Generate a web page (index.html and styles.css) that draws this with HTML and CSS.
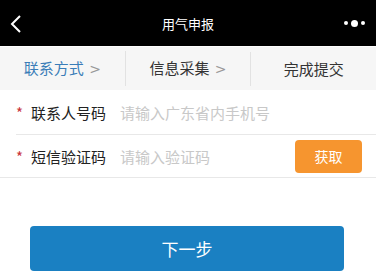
FILE: index.html
```html
<!DOCTYPE html>
<html lang="zh-CN">
<head>
  <meta charset="UTF-8">
  <meta name="viewport" content="width=device-width, initial-scale=1.0">
  <title>用气申报</title>
  <link rel="stylesheet" href="styles.css">
</head>
<body>
  <header class="topbar">
    <svg class="back" width="12" height="20" viewBox="0 0 12 20">
      <path d="M10 2 L2 10 L10 18" fill="none" stroke="#fff" stroke-width="2"/>
    </svg>
    <span class="title">用气申报</span>
    <span class="more"><i></i><i class="big"></i><i></i></span>
  </header>

  <nav class="steps">
    <div class="step active">联系方式 <span class="arrow">&gt;</span></div>
    <div class="step">信息采集 <span class="arrow">&gt;</span></div>
    <div class="step">完成提交</div>
  </nav>

  <form class="form">
    <div class="row">
      <span class="star">*</span>
      <label class="label">联系人号码</label>
      <input class="field" type="text" placeholder="请输入广东省内手机号">
    </div>
    <div class="row last">
      <span class="star">*</span>
      <label class="label">短信验证码</label>
      <input class="field" type="text" placeholder="请输入验证码">
      <button type="button" class="code-btn">获取</button>
    </div>
  </form>

  <div class="actions">
    <button type="button" class="next-btn">下一步</button>
  </div>
</body>
</html>
```

FILE: styles.css
```css
body {
  margin: 0;
  padding: 0;
  font-family: "Noto Sans CJK SC", "Noto Sans", sans-serif;
  background: #fff;
  color: #222;
  width: 376px;
  height: 278px;
  overflow: hidden;
}

.topbar {
  height: 46px;
  background: #000;
  display: flex;
  align-items: center;
  justify-content: space-between;
  padding: 0 11px 0 10px;
  box-sizing: border-box;
  color: #fff;
}
.topbar .back { margin-top: 1px; }
.topbar .title { font-size: 13px; margin-left: 10px; }
.more { display: flex; align-items: center; gap: 3px; }
.more i { width: 4px; height: 4px; border-radius: 50%; background: #fff; display: block; }
.more i.big { width: 7px; height: 7px; }

.steps {
  height: 43px;
  margin-top: 1px;
  background: #f6f6f6;
  display: flex;
  align-items: center;
  font-size: 15px;
}
.step {
  flex: 1;
  text-align: center;
  color: #333;
  border-left: 1px solid #e2e2e2;
  line-height: 34px;
}
.step:first-child { border-left: none; }
.step.active { color: #3a7db8; }
.arrow { color: #999; font-size: 14px; font-family: "DejaVu Sans", sans-serif; margin-left: 2px; }

.form { margin: 0; }
.row {
  height: 44px;
  display: flex;
  align-items: center;
  margin-left: 16px;
  border-bottom: 1px solid #e8e8e8;
  padding-right: 14px;
}
.row.last { margin-left: 0; padding-left: 16px; height: 42px; }
.star { color: #c9343a; font-size: 15px; width: 15px; }
.label { font-size: 15px; color: #222; width: 89px; }
.field {
  flex: 1;
  border: none;
  outline: none;
  font-family: inherit;
  font-size: 15px;
  padding: 0;
  background: transparent;
  min-width: 0;
}
.field::placeholder { color: #c8c8c8; }

.code-btn {
  width: 67px;
  height: 33px;
  border: none;
  border-radius: 4px;
  background: #f6952f;
  color: #fff;
  font-family: inherit;
  font-size: 14px;
}

.actions { padding: 48px 32px 0 30px; }
.next-btn {
  width: 100%;
  height: 45px;
  border: none;
  border-radius: 4px;
  background: #1a80c2;
  color: #fff;
  font-family: inherit;
  font-size: 17px;
}
```
